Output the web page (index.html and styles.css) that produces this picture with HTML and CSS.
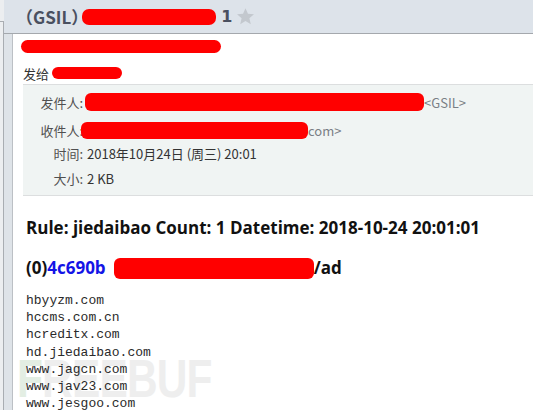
FILE: index.html
```html
<!DOCTYPE html>
<html lang="zh">
<head>
<meta charset="utf-8">
<link rel="stylesheet" href="styles.css">
</head>
<body>
<div class="app">
  <div class="edge"><div class="edge-line"></div></div>
  <div class="frame">
    <header class="header">
      <span class="subject-tag">（GSIL）</span>
      <span class="redact redact-head"></span>
      <span class="count">1</span>
      <svg class="star" viewBox="0 0 24 24" width="19" height="19"><path d="M12 1.5l3.1 7.1 7.6.6-5.8 5 1.8 7.5L12 17.7l-6.7 4 1.8-7.5-5.8-5 7.6-.6z" fill="#c3c8ce"/></svg>
    </header>
    <div class="main">
      <div class="rail"></div>
      <div class="panel">
        <div class="title-row"><span class="redact redact-title"></span></div>
        <div class="to-row"><span class="to-label">发给</span><span class="redact redact-to"></span></div>
        <div class="info">
          <div class="info-row r1"><span class="lbl">发件人:</span><span class="redact redact-from"></span><span class="addr">&lt;GSIL&gt;</span></div>
          <div class="info-row r2"><span class="lbl">收件人:</span><span class="redact redact-rcpt"></span><span class="addr">com&gt;</span></div>
          <div class="info-row r3"><span class="lbl">时间:</span><span class="val">2018年10月24日 (周三) 20:01</span></div>
          <div class="info-row r4"><span class="lbl">大小:</span><span class="val">2 KB</span></div>
        </div>
        <div class="content">
          <h3 class="rule">Rule: jiedaibao Count: 1 Datetime: 2018-10-24 20:01:01</h3>
          <h3 class="repo">(0)<span class="link">4c690b</span><span class="redact redact-repo"></span>/ad</h3>
          <pre class="list">hbyyzm.com
hccms.com.cn
hcreditx.com
hd.jiedaibao.com
www.jagcn.com
www.jav23.com
www.jesgoo.com</pre>
          <div class="watermark" aria-hidden="true"><span class="wm-f">F</span>REEBUF</div>
        </div>
      </div>
    </div>
  </div>
</div>
</body>
</html>
```
FILE: styles.css
```css
* { box-sizing: border-box; }
html, body { margin: 0; padding: 0; height: 100%; overflow: hidden; }
body { background: #fff; font-family: "Noto Sans CJK SC", "Noto Sans", sans-serif; }
.app { display: flex; height: 410px; }
.edge { width: 4px; background: #eceef0; flex: none; }
.edge-line { margin-top: 21px; height: 400px; border-top: 1px solid #a9adb2; border-right: 1px solid #a9adb2; }
.frame { flex: 1; display: flex; flex-direction: column; min-width: 0; }
.header { height: 34px; background: #dde3ea; border-bottom: 1px solid #a4a8ad; display: flex; align-items: center; padding-left: 12px; color: #4a5060; font-weight: bold; font-size: 17px; flex: none; }
.subject-tag { font-family: "Noto Sans CJK SC", sans-serif; }
.redact { display: inline-block; background: #ff0000; border-radius: 7px; vertical-align: middle; }
.redact-head { width: 134px; height: 16px; margin-left: -6px; }
.count { font-family: "DejaVu Sans", sans-serif; font-size: 16px; margin-left: 5px; }
.star { margin-left: 4px; }
.main { flex: 1; display: flex; min-height: 0; }
.rail { width: 9px; background: #dee3e8; border-right: 1px solid #bcc0c5; flex: none; }
.panel { flex: 1; background: #fff; position: relative; min-width: 0; }
.title-row { height: 28px; padding: 6px 0 0 8px; }
.redact-title { width: 200px; height: 13px; vertical-align: top; }
.to-row { height: 22px; display: flex; align-items: center; padding-left: 10px; font-size: 13px; color: #333; }
.redact-to { width: 70px; height: 12px; margin-left: 3px; border-radius: 6px; }
.info { margin-left: 10px; background: #f0f4f3; border-top: 1px solid #dcdedf; border-bottom: 1px solid #dcdedf; padding-top: 3px; height: 112px; font-size: 13px; }
.info-row { display: flex; align-items: center; }
.r1, .r2 { height: 28px; }
.r3 { height: 18px; }
.r4 { height: 32px; }
.lbl { width: 60px; text-align: right; color: #505050; flex: none; }
.val { color: #333; margin-left: 4px; }
.addr { color: #7a7f85; }
.redact-from { width: 339px; height: 18px; margin-left: 2px; border-radius: 6px; }
.redact-rcpt { width: 227px; height: 17px; margin-left: -2px; border-radius: 6px; }
.content { padding: 20px 0 0 13px; }
.rule, .repo { margin: 0; font-family: "Open Sans", sans-serif; font-weight: bold; font-size: 17px; line-height: 24px; color: #111; }
.repo { margin-top: 16px; display: flex; align-items: center; white-space: pre; }
.link { color: #1414e6; }
.redact-repo { width: 200px; height: 21px; border-radius: 6px; margin-left: 8px; }
.list { margin: 12px 0 0; font-family: "Liberation Mono", monospace; font-size: 13px; line-height: 17.2px; color: #2a2a2a; position: relative; z-index: 1; }
.watermark { position: absolute; left: 4px; top: 318px; font-family: "Liberation Sans", sans-serif; font-weight: bold; font-size: 53px; letter-spacing: -1px; color: #eeeeee; line-height: 1; transform: scaleX(0.8); transform-origin: left top; z-index: 0; }
.wm-f { color: #e3eee3; }
```
